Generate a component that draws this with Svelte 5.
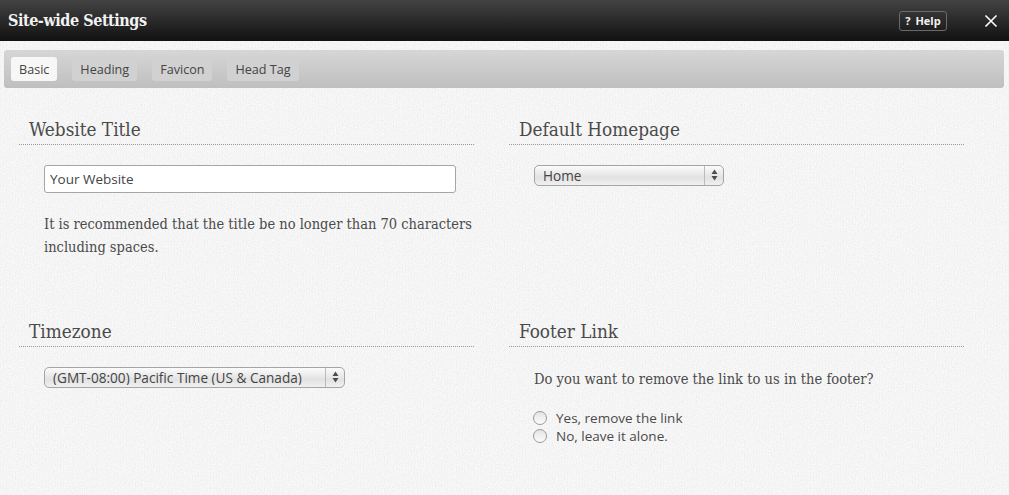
<script>
    let title = $state("Your Website");
    let activeTab = $state("Basic");
    let removeLink = $state("no");

    const tabs = ["Basic", "Heading", "Favicon", "Head Tag"];
</script>

<div class="settings">
    <header class="topbar">
        <h1>Site-wide Settings</h1>
        <button class="help"><span class="q">?</span> Help</button>
        <button class="close" aria-label="Close">
            <svg width="14" height="14" viewBox="0 0 14 14">
                <path d="M1.5 1.5 L12.5 12.5 M12.5 1.5 L1.5 12.5" stroke="#fff" stroke-width="1.6" fill="none"/>
            </svg>
        </button>
    </header>

    <nav class="toolbar">
        {#each tabs as tab}
            <button class="tab" class:active={activeTab === tab} onclick={() => { activeTab = tab }}>{tab}</button>
        {/each}
    </nav>

    <main class="grid">
        <section class="block top">
            <h2>Website Title</h2>
            <div class="body">
                <input class="text" type="text" bind:value={title} />
                <p class="hint">It is recommended that the title be no longer than 70 characters including spaces.</p>
            </div>
        </section>

        <section class="block top">
            <h2>Default Homepage</h2>
            <div class="body">
                <div class="select home">
                    <select>
                        <option>Home</option>
                    </select>
                    <svg class="arrows" width="7" height="12" viewBox="0 0 7 12">
                        <path d="M3.5 0.5 L6.5 5 L0.5 5 Z M3.5 11.5 L6.5 7 L0.5 7 Z" fill="#4c4c4c"/>
                    </svg>
                </div>
            </div>
        </section>

        <section class="block">
            <h2>Timezone</h2>
            <div class="body">
                <div class="select zone">
                    <select>
                        <option>(GMT-08:00) Pacific Time (US &amp; Canada)</option>
                    </select>
                    <svg class="arrows" width="7" height="12" viewBox="0 0 7 12">
                        <path d="M3.5 0.5 L6.5 5 L0.5 5 Z M3.5 11.5 L6.5 7 L0.5 7 Z" fill="#4c4c4c"/>
                    </svg>
                </div>
            </div>
        </section>

        <section class="block">
            <h2>Footer Link</h2>
            <div class="body">
                <p class="question">Do you want to remove the link to us in the footer?</p>
                <label class="radio"><input type="radio" name="footer" value="yes" bind:group={removeLink} /> Yes, remove the link</label>
                <label class="radio"><input type="radio" name="footer" value="no" bind:group={removeLink} /> No, leave it alone.</label>
            </div>
        </section>
    </main>
</div>

<style>
    :global(body) {
        margin: 0;
        overflow: hidden;
    }

    .settings {
        height: 495px;
        background-color: #f0f0f0;
        background-image:
            url("data:image/svg+xml,%3Csvg xmlns='http://www.w3.org/2000/svg' width='300' height='300'%3E%3Cfilter id='n'%3E%3CfeTurbulence type='fractalNoise' baseFrequency='0.9 0.7' numOctaves='2' stitchTiles='stitch'/%3E%3CfeColorMatrix values='0 0 0 0 1 0 0 0 0 1 0 0 0 0 1 1.4 0 0 0 -0.35'/%3E%3C/filter%3E%3Crect width='300' height='300' filter='url(%23n)'/%3E%3C/svg%3E"),
            repeating-linear-gradient(90deg, rgba(0, 0, 0, 0.012) 0 1px, transparent 1px 3px);
        color: #4a4a4a;
        overflow: hidden;
    }

    .topbar {
        height: 41px;
        display: flex;
        align-items: center;
        padding: 0 11px 0 8px;
        box-sizing: border-box;
        background: linear-gradient(#434343, #111111);
    }

    h1 {
        flex: 1;
        margin: 0;
        font-family: "DejaVu Serif Condensed", "DejaVu Serif", serif;
        font-stretch: condensed;
        font-size: 16px;
        font-weight: bold;
        letter-spacing: -0.45px;
        color: #f2f2f2;
    }

    .help {
        width: 48px;
        height: 20px;
        margin-right: 37px;
        padding: 0;
        background: transparent;
        border: 1px solid #6a6a6a;
        border-radius: 3px;
        color: #f2f2f2;
        font-family: "Open Sans", sans-serif;
        font-size: 11px;
        font-weight: bold;
        cursor: pointer;
    }

    .help .q {
        margin-right: 2px;
    }

    .close {
        display: flex;
        padding: 0;
        background: none;
        border: none;
        cursor: pointer;
    }

    .toolbar {
        display: flex;
        gap: 15px;
        height: 38px;
        margin: 9px 5px 0 4px;
        padding: 7px 0 0 7px;
        box-sizing: border-box;
        border-radius: 3px;
        background: linear-gradient(#d6d6d6, #bfbfbf);
    }

    .tab {
        height: 24px;
        padding: 0 8px;
        border: none;
        border-radius: 3px;
        background: #d1d1d1;
        color: #444;
        font-family: "Open Sans", sans-serif;
        font-size: 12.6px;
        cursor: pointer;
    }

    .tab.active {
        background: #f7f7f7;
    }

    .grid {
        display: grid;
        grid-template-columns: 455px 455px;
        column-gap: 35px;
        padding: 30px 0 0 19px;
    }

    .block.top {
        height: 202px;
    }

    h2 {
        margin: 0;
        height: 26px;
        padding-left: 10px;
        border-bottom: 1px dotted #999;
        font-family: "DejaVu Serif Condensed", "DejaVu Serif", serif;
        font-stretch: condensed;
        font-size: 18.8px;
        font-weight: normal;
        line-height: 24px;
        color: #4a4a4a;
    }

    .body {
        padding: 20px 0 0 25px;
    }

    .text {
        display: block;
        width: 412px;
        height: 28px;
        padding: 0 5px;
        box-sizing: border-box;
        border: 1px solid #a5a5a5;
        border-radius: 3px;
        background: #fff;
        color: #444;
        font-family: "Open Sans", sans-serif;
        font-size: 13.5px;
    }

    .hint {
        margin: 20px 0 0;
        width: 436px;
        font-family: "DejaVu Serif Condensed", "DejaVu Serif", serif;
        font-stretch: condensed;
        font-size: 14.5px;
        line-height: 23px;
        color: #4a4a4a;
    }

    .select {
        position: relative;
        height: 21px;
    }

    .select.home {
        width: 190px;
    }

    .select.zone {
        width: 301px;
    }

    select {
        appearance: none;
        width: 100%;
        height: 100%;
        padding: 0 0 2px 8px;
        border: 1px solid #a5a5a5;
        border-radius: 5px;
        background: linear-gradient(90deg, transparent calc(100% - 19px), #bbb calc(100% - 19px), #bbb calc(100% - 18px), transparent calc(100% - 18px)), linear-gradient(#fbfbfb, #e2e2e2 60%, #f0f0f0);
        color: #444;
        font-family: "Open Sans", sans-serif;
        font-size: 13.6px;
    }

    .arrows {
        position: absolute;
        top: 4px;
        right: 6px;
    }

    .question {
        margin: 0 0 19px;
        font-family: "DejaVu Serif Condensed", "DejaVu Serif", serif;
        font-stretch: condensed;
        font-size: 14.6px;
        line-height: 23px;
        color: #4a4a4a;
    }

    .radio {
        display: flex;
        align-items: center;
        gap: 9px;
        height: 18px;
        font-family: "Open Sans", sans-serif;
        font-size: 13.5px;
        color: #4a4a4a;
    }

    .radio input {
        appearance: none;
        width: 14px;
        height: 14px;
        margin: 0 0 0 -1px;
        border: 1px solid #9a9a9a;
        border-radius: 50%;
        background: linear-gradient(#e4e4e4, #fcfcfc);
    }
</style>
